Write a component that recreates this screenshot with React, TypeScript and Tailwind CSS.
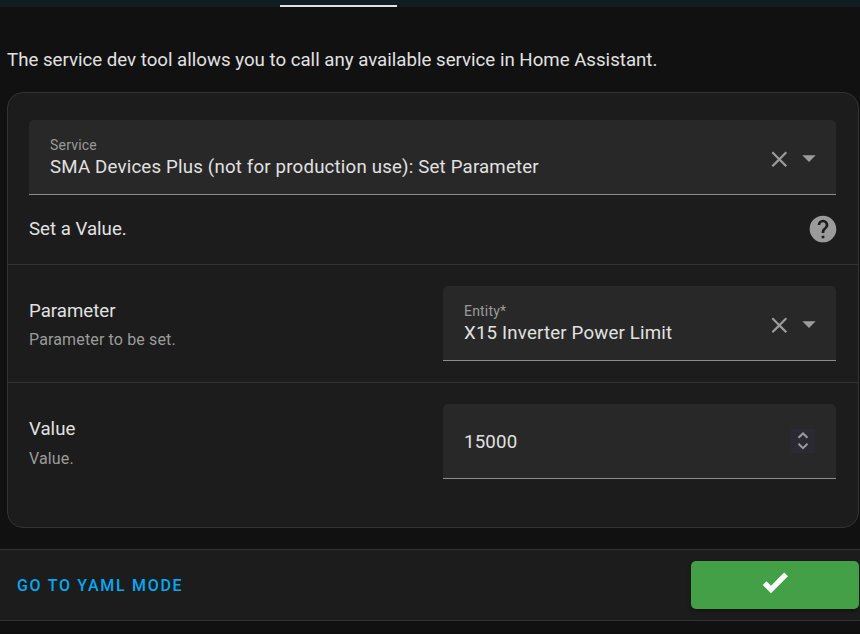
import React from "react";

const CLOSE =
  "M19,6.41L17.59,5L12,10.59L6.41,5L5,6.41L10.59,12L5,17.59L6.41,19L12,13.41L17.59,19L19,17.59L13.41,12L19,6.41Z";
const MENU_DOWN = "M7,10L12,15L17,10H7Z";
const HELP =
  "M15.07,11.25L14.17,12.17C13.45,12.89 13,13.5 13,15H11V14.5C11,13.39 11.45,12.39 12.17,11.67L13.41,10.41C13.78,10.05 14,9.55 14,9C14,7.89 13.1,7 12,7A2,2 0 0,0 10,9H8A4,4 0 0,1 12,5A4,4 0 0,1 16,9C16,9.88 15.64,10.67 15.07,11.25M13,19H11V17H13M12,2A10,10 0 0,0 2,12A10,10 0 0,0 12,22A10,10 0 0,0 22,12C22,6.47 17.5,2 12,2Z";
const CHECK =
  "M9,20.42L2.79,14.21L5.62,11.38L9,14.77L18.88,4.88L21.71,7.71L9,20.42Z";

function Icon({ d, className }: { d: string; className: string }) {
  return (
    <svg viewBox="0 0 24 24" className={`shrink-0 ${className}`} fill="currentColor">
      <path d={d} />
    </svg>
  );
}

function ComboField({ label, value }: { label: string; value: string }) {
  return (
    <div className="flex h-[75px] w-full items-center rounded-t-[5px] border-b border-[#8d8d8d] bg-[#282828] pl-[21px] pr-[11px]">
      <div className="flex grow flex-col pb-px">
        <span className="text-[14px] leading-[20px] tracking-[0.2px] text-[#9b9b9b]">{label}</span>
        <span className="text-[18.667px] leading-[24px] tracking-[0.185px]">{value}</span>
      </div>
      <Icon d={CLOSE} className="mt-[5px] size-[26.667px] text-[#9b9b9b]" />
      <Icon d={MENU_DOWN} className="mt-[2px] size-8 text-[#9b9b9b]" />
    </div>
  );
}

function SettingText({ title, description, gap }: { title: string; description: string; gap: string }) {
  return (
    <div className={`flex w-[414px] shrink-0 flex-col pt-3 ${gap}`}>
      <span className="text-[18.667px] leading-[27px]">{title}</span>
      <span className="text-[16px] leading-[27px] tracking-[0.14px] text-[#9b9b9b]">{description}</span>
    </div>
  );
}

export default function App() {
  return (
    <div className="flex h-[634px] w-[860px] flex-col overflow-hidden bg-[#111111] font-['Roboto',sans-serif] text-[#e1e1e1]">
      <div className="flex h-[7px] shrink-0 items-end bg-[#101e24] pl-[280px]">
        <div className="h-[2px] w-[117px] bg-[#e1e1e1]" />
      </div>
      <p className="mt-[40px] h-[27px] shrink-0 pl-[7px] text-[18.667px] leading-[27px]">
        The service dev tool allows you to call any available service in Home Assistant.
      </p>
      <main className="ml-[7px] mt-[18px] h-[436px] w-[852px] shrink-0 rounded-[16px] border border-[#333333] bg-[#1c1c1c]">
        <div className="flex h-[171px] flex-col px-[21px] pt-[27px]">
          <div className="w-[807px]">
            <ComboField label="Service" value="SMA Devices Plus (not for production use): Set Parameter" />
          </div>
          <div className="mt-[18px] flex w-[810px] items-center justify-between">
            <span className="text-[18.667px] leading-[27px]">Set a Value.</span>
            <Icon d={HELP} className="size-8 text-[#9b9b9b]" />
          </div>
        </div>
        <div className="flex h-[118px] border-t border-[#333333] px-[21px] pt-[21px]">
          <SettingText title="Parameter" description="Parameter to be set." gap="gap-px" />
          <div className="w-[393px]">
            <ComboField label="Entity*" value="X15 Inverter Power Limit" />
          </div>
        </div>
        <div className="flex border-t border-[#333333] px-[21px] pt-[21px]">
          <SettingText title="Value" description="Value." gap="gap-0.5" />
          <div className="flex h-[75px] w-[393px] items-center justify-between rounded-t-[5px] border-b border-[#8d8d8d] bg-[#282828] px-[21px]">
            <span className="pt-[2px] text-[18.667px] leading-[27px] tracking-[0.185px]">15000</span>
            <span className="flex h-6 w-6 items-center justify-center bg-[#2b2a33]">
              <svg viewBox="0 0 24 24" className="size-6" fill="none" stroke="#9b9b9f" strokeWidth="2">
                <path d="M7.5 8.8L12 4.5L16.5 8.8M7.5 14.8L12 19.1L16.5 14.8" />
              </svg>
            </span>
          </div>
        </div>
      </main>
      <footer className="mt-[21px] flex h-[72px] shrink-0 items-center justify-between border-y border-[#333333] bg-[#1c1c1c] pl-[17px] pr-px">
        <button className="text-[16px] font-medium leading-[27px] tracking-[1.71px] text-[#03a9f4]">GO TO YAML MODE</button>
        <button className="flex h-12 w-[168px] items-start justify-center rounded-[5px] bg-[#43a047] pt-[5px] text-white shadow-[0_3px_4px_rgba(0,0,0,0.25)]">
          <Icon d={CHECK} className="size-8" />
        </button>
      </footer>
      <div className="mt-3 h-px shrink-0 bg-[#0d0d0d]" />
    </div>
  );
}
